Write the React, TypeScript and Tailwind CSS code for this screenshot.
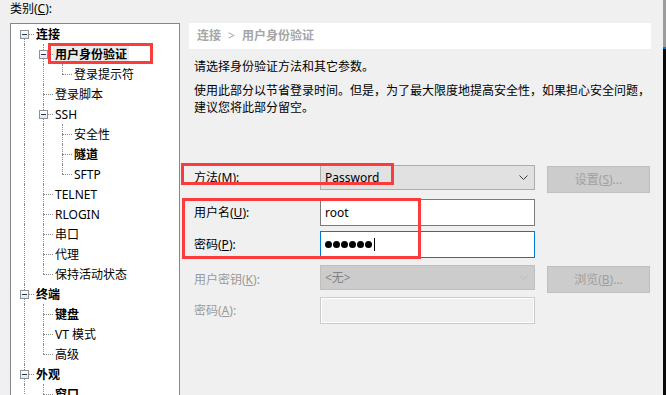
import React from "react";

type Col = "none" | "pipe" | "tee" | "elbow" | "first";

interface TreeRow {
  label: string;
  cols: Col[];
  box?: boolean;
  bold?: boolean;
  selected?: boolean;
}

const rows: TreeRow[] = [
  { label: "连接", cols: ["first"], box: true, bold: true },
  { label: "用户身份验证", cols: ["pipe", "tee"], box: true, bold: true, selected: true },
  { label: "登录提示符", cols: ["pipe", "pipe", "elbow"] },
  { label: "登录脚本", cols: ["pipe", "tee"] },
  { label: "SSH", cols: ["pipe", "tee"], box: true },
  { label: "安全性", cols: ["pipe", "pipe", "tee"] },
  { label: "隧道", cols: ["pipe", "pipe", "tee"], bold: true },
  { label: "SFTP", cols: ["pipe", "pipe", "elbow"] },
  { label: "TELNET", cols: ["pipe", "tee"] },
  { label: "RLOGIN", cols: ["pipe", "tee"] },
  { label: "串口", cols: ["pipe", "tee"] },
  { label: "代理", cols: ["pipe", "tee"] },
  { label: "保持活动状态", cols: ["pipe", "elbow"] },
  { label: "终端", cols: ["tee"], box: true, bold: true },
  { label: "键盘", cols: ["pipe", "tee"], bold: true },
  { label: "VT 模式", cols: ["pipe", "tee"] },
  { label: "高级", cols: ["pipe", "elbow"] },
  { label: "外观", cols: ["tee"], box: true, bold: true },
  { label: "窗口", cols: ["pipe", "tee"], bold: true },
];

// 树的虚线连接
function Guide({ kind, box }: { kind: Col; box?: boolean }) {
  return (
    <div className="relative h-5 w-[19px] shrink-0">
      {(kind === "pipe" || kind === "tee") && (
        <div className="absolute left-[9px] top-0 h-5 border-l border-dotted border-[#8a8a8a]" />
      )}
      {kind === "elbow" && (
        <div className="absolute left-[9px] top-0 h-[10px] border-l border-dotted border-[#8a8a8a]" />
      )}
      {kind === "first" && (
        <div className="absolute left-[9px] top-[10px] h-[10px] border-l border-dotted border-[#8a8a8a]" />
      )}
      {kind !== "pipe" && kind !== "none" && (
        <div className="absolute left-[9px] right-0 top-[10px] border-t border-dotted border-[#8a8a8a]" />
      )}
      {box && (
        <span className="absolute left-[5px] top-[6px] flex h-[9px] w-[9px] items-center justify-center border border-[#919191] bg-gradient-to-b from-white to-[#e6e6e6]">
          <span className="h-px w-[5px] bg-[#1e395b]" />
        </span>
      )}
    </div>
  );
}

function Chevron({ color }: { color: string }) {
  return (
    <svg width="9" height="6" viewBox="0 0 9 6" className="shrink-0">
      <path d="M0.5 0.5 L4.5 4.5 L8.5 0.5" fill="none" stroke={color} strokeWidth="1" />
    </svg>
  );
}

export default function App() {
  return (
    <div className="relative flex h-[395px] w-[666px] overflow-hidden bg-[#f0f0f0] font-['Noto_Sans','Noto_Sans_CJK_SC',sans-serif] text-[12px] text-black">
      {/* 左侧：类别树 */}
      <div className="w-[180px] shrink-0 pl-[10px]">
        <div className="h-[18px] leading-[18px]">
          类别(<span className="underline">C</span>):
        </div>
        <div className="mt-[5px] h-[400px] border border-[#828790] bg-white pl-[4px]">
          {rows.map((r) => (
            <div key={r.label} className="flex h-5 items-center">
              {r.cols.map((c, i) => (
                <Guide key={i} kind={c} box={r.box && i === r.cols.length - 1} />
              ))}
              {r.selected ? (
                <span className="bg-[#ececec] px-[2px] pt-px leading-[16px] font-bold whitespace-nowrap">
                  {r.label}
                </span>
              ) : (
                <span
                  className={`ml-[2px] pt-px leading-[16px] whitespace-nowrap ${r.bold ? "font-bold" : ""}`}
                >
                  {r.label}
                </span>
              )}
            </div>
          ))}
        </div>
      </div>

      {/* 右侧：用户身份验证 */}
      <div className="ml-[9px] flex w-[462px] shrink-0 flex-col">
        <div className="mt-[23px] flex h-[26px] items-center bg-white pl-[8px] font-bold text-[#a6a6a6]">
          连接<span className="mx-[7px] font-normal">&gt;</span>用户身份验证
        </div>
        <div className="mt-[9px] pl-[5px] leading-[17px] whitespace-nowrap">
          请选择身份验证方法和其它参数。
        </div>
        <div className="mt-[7px] pl-[5px] leading-[17px] whitespace-nowrap">
          使用此部分以节省登录时间。但是，为了最大限度地提高安全性，如果担心安全问题，
          <br />
          建议您将此部分留空。
        </div>

        {/* 方法 */}
        <div className="mt-[49px] flex h-[28px] items-start pl-[5px]">
          <div className="flex h-[26px] w-[126px] items-center">
            方法(<span className="underline">M</span>):
          </div>
          <div className="flex h-[25px] w-[215px] items-center justify-between border border-[#adadad] bg-[#e1e1e1] pr-[6px] pl-[4px]">
            <span>Password</span>
            <Chevron color="#3c3c3c" />
          </div>
          <button className="mt-[1px] ml-[12px] h-[27px] w-[103px] border border-[#bfbfbf] bg-[#cccccc] text-[#a0a0a0]">
            设置(<span className="underline">S</span>)...
          </button>
        </div>

        {/* 用户名 */}
        <div className="mt-[6px] flex h-[27px] items-center pl-[5px]">
          <div className="w-[126px]">
            用户名(<span className="underline">U</span>):
          </div>
          <div className="flex h-[27px] w-[215px] items-center border border-[#7a7a7a] bg-white pl-[4px]">
            root
          </div>
        </div>

        {/* 密码 */}
        <div className="mt-[5px] flex h-[27px] items-center pl-[5px]">
          <div className="w-[126px]">
            密码(<span className="underline">P</span>):
          </div>
          <div className="flex h-[27px] w-[215px] items-center gap-[1px] border border-[#0078d7] bg-white pl-[4px]">
            {[0, 1, 2, 3, 4, 5].map((i) => (
              <span key={i} className="h-[7px] w-[7px] rounded-full bg-black" />
            ))}
            <span className="ml-[1px] h-[13px] w-px bg-black" />
          </div>
        </div>

        {/* 用户密钥 */}
        <div className="mt-[7px] flex h-[28px] items-start pl-[5px] text-[#9a9a9a]">
          <div className="flex h-[30px] w-[126px] items-center">
            用户密钥(<span className="underline">K</span>):
          </div>
          <div className="flex h-[25px] w-[215px] items-center justify-between border border-[#bfbfbf] bg-[#cccccc] pr-[6px] pl-[4px] text-[#838383]">
            <span>&lt;无&gt;</span>
            <Chevron color="#bdbdbd" />
          </div>
          <button className="mt-[1px] ml-[12px] h-[27px] w-[103px] border border-[#bfbfbf] bg-[#cccccc] text-[#a0a0a0]">
            浏览(<span className="underline">B</span>)...
          </button>
        </div>

        {/* 密码(A) */}
        <div className="mt-[4px] flex h-[27px] items-center pl-[5px] text-[#9a9a9a]">
          <div className="w-[126px]">
            密码(<span className="underline">A</span>):
          </div>
          <div className="h-[27px] w-[215px] border border-[#cccccc] bg-[#f0f0f0] shadow-[inset_0_0_0_1px_#ffffff]" />
        </div>
      </div>

      <div className="flex-1" />

      {/* 右侧边缘 */}
      <div className="flex w-[3px] shrink-0 flex-col">
        <div className="h-[47px] bg-[#9c9c9c]" />
        <div className="h-[2px] bg-[#0078d7]" />
        <div className="flex-1 bg-[#0a0a0a]" />
      </div>

      {/* 红色标注框 */}
      <div className="pointer-events-none absolute top-[43px] left-[48px] h-[21px] w-[105px] border-[3px] border-[#fb3c3c]" />
      <div className="pointer-events-none absolute top-[163px] left-[181px] h-[22px] w-[213px] border-[3px] border-[#fb3c3c]" />
      <div className="pointer-events-none absolute top-[198px] left-[182px] h-[61px] w-[239px] border-[3px] border-[#fb3c3c]" />
    </div>
  );
}
